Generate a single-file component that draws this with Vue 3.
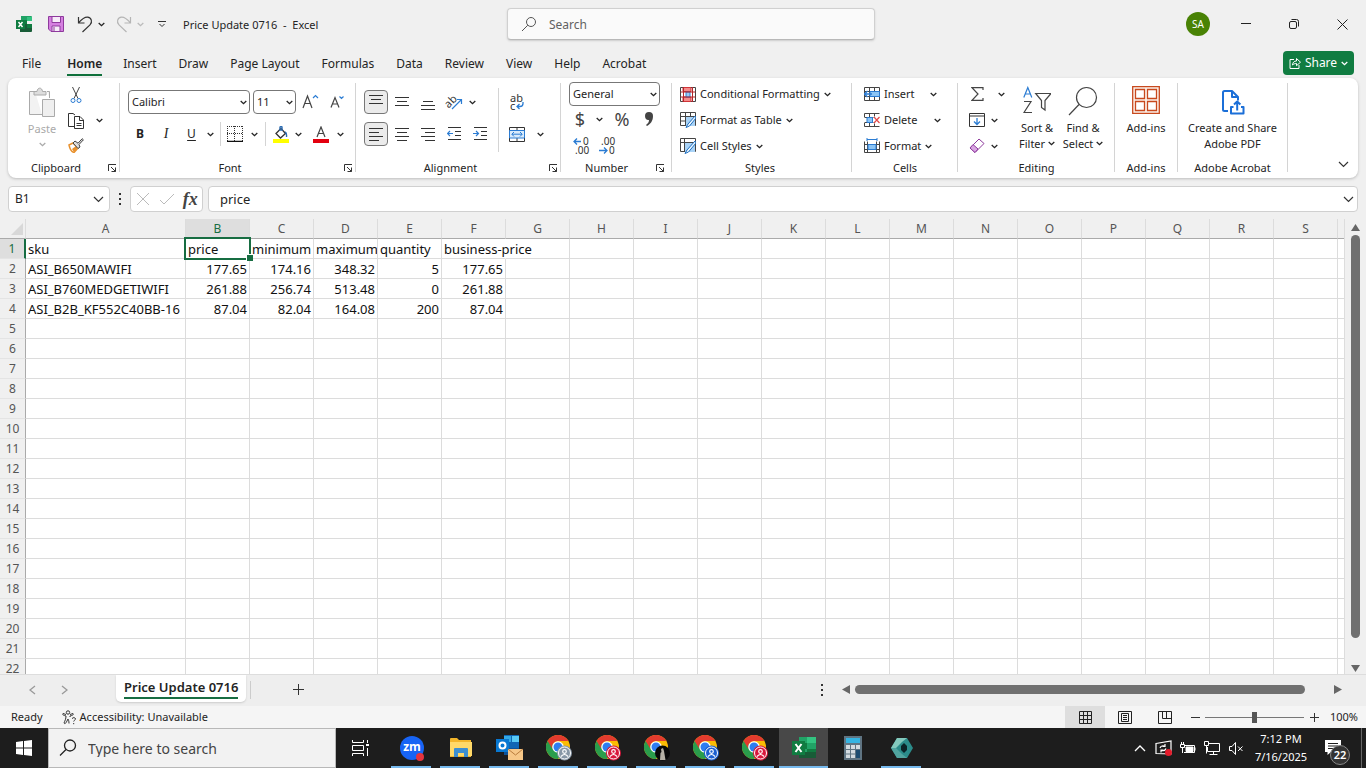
<script setup>
import { h, ref } from 'vue'

const Chev = () => h('svg', { width: 7, height: 5, viewBox: '0 0 7 5', fill: 'none', stroke: 'currentColor', 'stroke-width': 1.3 }, [h('path', { d: 'M.7 1 3.5 3.7 6.3 1' })])
const Launcher = () => h('svg', { width: 10, height: 10, viewBox: '0 0 10 10', fill: 'none', stroke: '#333' }, [h('path', { d: 'M1.5 8V1.5H9M4 4l4.5 4.5M8.5 4.5v4h-4' })])

const menu = ['File', 'Home', 'Insert', 'Draw', 'Page Layout', 'Formulas', 'Data', 'Review', 'View', 'Help', 'Acrobat']
const columns = 'ABCDEFGHIJKLMNOPQRS'.split('').concat('')
const cells = {
  1: ['sku', 'price', 'minimum', 'maximum', 'quantity', 'business-price'],
  2: ['ASI_B650MAWIFI', '177.65', '174.16', '348.32', '5', '177.65'],
  3: ['ASI_B760MEDGETIWIFI', '261.88', '256.74', '513.48', '0', '261.88'],
  4: ['ASI_B2B_KF552C40BB-16', '87.04', '82.04', '164.08', '200', '87.04'],
}
const cellText = (r, i) => (cells[r] && cells[r][i]) || ''

const vAligns = [
  { name: 'Top Align', d: 'M0 1.5h14M2 5.5h10M0 9.5h14', on: true },
  { name: 'Middle Align', d: 'M0 3.5h14M2 7.5h10M0 11.5h14' },
  { name: 'Bottom Align', d: 'M2 7.5h10M0 11.5h14M0 15.5h14' },
]
const hAligns = [
  { name: 'Align Left', d: 'M0 2.5h14M0 6.5h10M0 10.5h14M0 14.5h10', on: true },
  { name: 'Center', d: 'M0 2.5h14M2 6.5h10M0 10.5h14M2 14.5h10' },
  { name: 'Align Right', d: 'M0 2.5h14M4 6.5h10M0 10.5h14M4 14.5h10' },
]
const apps = [
  { id: 'zoom', open: true }, { id: 'files', open: true }, { id: 'outlook', open: true },
  { id: 'chrome', badge: '#8796a5', open: true }, { id: 'chrome', badge: '#d8173c', open: true },
  { id: 'chrome', badge: '', open: true }, { id: 'chrome', badge: '#1a5fd0', open: true },
  { id: 'chrome', badge: '#d8173c', open: true }, { id: 'excel', open: true, active: true },
  { id: 'calc' }, { id: 'hex', open: true },
]
const formula = ref('price')
const cellRef = ref('B1')
const zoom = ref(50)
</script>

<template>
  <div class="window">
    <header class="titlebar">
      <div class="quick">
        <svg class="logo" width="16" height="16" viewBox="0 0 16 16"><path fill="#21a366" d="M5 0h10a1 1 0 0 1 1 1v4H5z" /><path fill="#107c41" d="M4 4h7v8H4z" /><path fill="#33c481" d="M11 1h5v4h-5z" /><path fill="#185c37" d="M4 8h12v7a1 1 0 0 1-1 1H4z" /><path fill="#107c41" d="M11 8h5v4h-5zM0 4h9v9H0z" /><path d="m2.500 6 4 5m0-5-4 5" stroke="#fff" stroke-width="1.500" /></svg>
        <button class="save" aria-label="Save"><svg width="16" height="16" viewBox="0 0 16 16"><path d="M.5.500h15v15H3L.5 13z" fill="#d57fe0" stroke="#8e3a9d" /><path d="M4 .5h8.500v6H4zM4 10h8v5.500H4z" fill="#f7eaf9" stroke="#8e3a9d" /><path d="M6 11v4" stroke="#8e3a9d" /></svg></button>
        <button class="undo" aria-label="Undo"><svg width="16" height="17" viewBox="0 0 16 17" fill="none" stroke="#333" stroke-width="1.200"><path d="M1.500 1v6h6M1.700 6.700C5 3 7.500 1 10.500 1.200c4 .3 5.300 4.800 2.500 7.600L5.500 16" /></svg></button>
        <button class="mini" aria-label="Undo list"><Chev /></button>
        <button class="undo faded" aria-label="Redo"><svg width="16" height="17" viewBox="0 0 16 17" fill="none" stroke="#b5b5b5" stroke-width="1.200"><path d="M14.500 1v6h-6M14.300 6.700C11 3 8.500 1 5.500 1.200c-4 .3-5.300 4.800-2.500 7.600L10.500 16" /></svg></button>
        <button class="mini faded" aria-label="Redo list"><Chev /></button>
        <button class="custom" aria-label="Customize Quick Access Toolbar"><svg width="8" height="8" viewBox="0 0 8 8" fill="none" stroke="#333"><path d="M0 1.500h8M1.500 4 4 6.500 6.500 4" /></svg></button>
        <h1>Price Update 0716&nbsp; -&nbsp; Excel</h1>
      </div>
      <label class="find">
        <svg width="16" height="16" viewBox="0 0 16 16" fill="none" stroke="#555"><circle cx="10" cy="6" r="4.500" /><path d="M6.800 9.200 1 15" /></svg>
        <input type="text" placeholder="Search" aria-label="Search">
      </label>
      <div class="wincontrols">
        <button class="avatar" aria-label="Account">SA</button>
        <button class="win" aria-label="Minimize"><svg width="10" height="10"><path d="M0 4.500h10" stroke="#222" /></svg></button>
        <button class="win" aria-label="Restore"><svg width="10" height="10" fill="none" stroke="#222"><rect x=".5" y="2.500" width="7" height="7" rx="1.500" /><path d="M2.500.5h5a2 2 0 0 1 2 2v5" /></svg></button>
        <button class="win" aria-label="Close"><svg width="11" height="11" stroke="#222"><path d="m.5.500 10 10m0-10-10 10" /></svg></button>
      </div>
    </header>

    <nav class="menu">
      <a v-for="m in menu" :key="m" href="#" :class="{ current: m === 'Home' }">{{ m }}</a>
      <button class="share"><svg width="12" height="12" viewBox="0 0 12 12" fill="none" stroke="#fff"><path d="M5 2.500H1v9h9V8M3.500 8c.2-2.500 1.500-4 4-4V1.500l4 3.700-4 3.500V6.500c-1.800 0-3 .5-4 1.500z" /></svg>Share<Chev /></button>
    </nav>

    <section class="ribbon" aria-label="Home ribbon">
      <div class="group clipboard">
        <div class="body">
          <button class="paste" disabled>
            <svg width="28" height="32" viewBox="0 0 28 32" fill="#f2f2f2" stroke="#aaa"><path d="M7 4.500H1.500v23H14M19 4.500h2.500V11" /><path fill="#ddd" d="M6 8V4.500h3C9.500 0 14 0 14.500 4.500H18V8z" /><path fill="#efefef" d="M14.500 12.500h12v17h-12z" /></svg>
            <span>Paste</span><Chev />
          </button>
          <div class="clipcol">
            <button aria-label="Cut"><svg width="12" height="17" viewBox="0 0 12 17" fill="none"><path d="M2.500 0 8 11.500M9.500 0 4 11.500" stroke="#444" /><circle cx="3" cy="13.500" r="2" stroke="#2b7cd3" /><circle cx="9" cy="13.500" r="2" stroke="#2b7cd3" /></svg></button><i></i>
            <button aria-label="Copy"><svg width="16" height="16" viewBox="0 0 16 16" fill="#fff" stroke="#333"><path d="M7 13.500H.5V.5H5l2 1.500M6.500 3.500H12l3.500 3.500v8.500h-9zM11.500 3.500V7.500h4M8.500 10.500h5M8.500 12.500h5" /></svg></button><button aria-label="Copy options"><Chev /></button>
            <button aria-label="Format Painter"><svg width="16" height="15" viewBox="0 0 16 15"><path d="m1 7 4-2 5 5-4 4.500c-2.500-.5-4-3-5-7.500z" fill="#fff" stroke="#e8912d" stroke-width="1.500" /><path d="m4 11 4-3 1.500 2L6 14z" fill="#e8912d" /><path d="m5 5 2-2 3 2.200L14.200.7l1.200 1.100L11 6.500l1 2.500-2 1.500z" fill="#ddd" stroke="#444" /></svg></button><i></i>
          </div>
        </div>
        <div class="caption"><span>Clipboard</span><button aria-label="Clipboard settings"><Launcher /></button></div>
      </div>

      <div class="group font">
        <div class="body stack">
          <div class="line pickers">
            <label class="picker"><select aria-label="Font"><option>Calibri</option></select><Chev /></label>
            <label class="picker"><select aria-label="Font size"><option>11</option></select><Chev /></label>
            <button class="grow" aria-label="Increase font size"><svg width="17" height="16" fill="none" stroke="#444" stroke-width="1.200"><path d="m1 14 4.500-12L10 14M2.500 9.500h6" /><path d="m11 4 2.500-2.500L16 4" stroke="#2b7cd3" /></svg></button>
            <button class="grow last" aria-label="Decrease font size"><svg width="15" height="14" fill="none" stroke="#444" stroke-width="1.200"><path d="m1 12.500 4-10 4 10M2.500 9h5" /><path d="m9.500 1.500 2 2 2-2" stroke="#2b7cd3" /></svg></button>
          </div>
          <div class="line fontfmt">
            <button class="bold">B</button><button class="italic">I</button><button class="under">U</button>
            <button aria-label="Underline options"><Chev /></button><span class="rule"></span>
            <button aria-label="Borders"><svg width="16" height="16" fill="none" stroke="#333"><path d="M.5 0v15M15.500 0v15M0 .5h16M7.500 0v15M0 7.500h16" stroke-dasharray="1 1" /><path d="M0 15.500h16" stroke="#111" stroke-width="1.500" /></svg></button>
            <button aria-label="Border options"><Chev /></button><span class="rule"></span>
            <button aria-label="Fill color"><svg width="16" height="17"><path d="M3 7.500 8 2.500l4.500 5-5 4.500z" fill="#fff" stroke="#333" stroke-width="1.300" /><path d="M7 5V1q1.500-1 2 0v4M12 6q2 1 1.500 5" fill="none" stroke="#2b6cb3" stroke-width="1.400" /><path d="M0 13h16v4H0z" fill="#ff0" /></svg></button>
            <button aria-label="Fill color options"><Chev /></button>
            <button aria-label="Font color"><svg width="16" height="17"><path d="m4 11 4-10 4 10M5.300 7.500h5.400" fill="none" stroke="#444" stroke-width="1.200" /><path d="M0 13h16v4H0z" fill="#e3000f" /></svg></button>
            <button aria-label="Font color options"><Chev /></button>
          </div>
        </div>
        <div class="caption"><span>Font</span><button aria-label="Font settings"><Launcher /></button></div>
      </div>

      <div class="group alignment">
        <div class="body">
          <div class="stack">
            <div class="line aligns">
              <button v-for="a in vAligns" :key="a.name" :aria-label="a.name" :class="{ on: a.on }"><svg width="14" height="17" fill="none" stroke="#333"><path :d="a.d" /></svg></button>
              <button aria-label="Orientation"><svg class="loose" width="17" height="16"><text x="-1" y="12" class="tilt" transform="rotate(-45 4 9)">ab</text><path d="M6 15 15.500 5.500M11 5.500h4.500V10" fill="none" stroke="#2b7cd3" stroke-width="1.200" /></svg></button>
              <button class="slim" aria-label="Orientation options"><Chev /></button>
            </div>
            <div class="line aligns">
              <button v-for="a in hAligns" :key="a.name" :aria-label="a.name" :class="{ on: a.on }"><svg width="14" height="17" fill="none" stroke="#333"><path :d="a.d" /></svg></button>
              <button aria-label="Decrease indent"><svg width="15" height="16" fill="none" stroke="#333"><path d="M1 1.500h13M8 5.500h6M8 9.500h6M1 13.500h13" /><path d="M6 7.500H.5M3 5 .5 7.500 3 10" stroke="#2b7cd3" stroke-width="1.200" /></svg></button>
              <button aria-label="Increase indent"><svg width="15" height="16" fill="none" stroke="#333"><path d="M1 1.500h13M8 5.500h6M8 9.500h6M1 13.500h13" /><path d="M0 7.500h5.500M3 5l2.500 2.500L3 10" stroke="#2b7cd3" stroke-width="1.200" /></svg></button>
            </div>
          </div>
          <span class="rule tall"></span>
          <div class="stack wraps">
            <button class="wrap" aria-label="Wrap Text"><svg class="loose" width="15" height="18"><text x="0" y="9" class="ab">ab</text><text x="0" y="17" class="ab">c</text><path d="M13 9v1.500q0 3-3 3H7M9.500 11 7 13.500 9.500 16" fill="none" stroke="#2b7cd3" stroke-width="1.300" /></svg></button>
            <div class="merge"><button aria-label="Merge and Center"><svg width="16" height="15" fill="none" stroke="#333"><path d="M.5.500h15v14H.5zM8 .5v3M8 11v3.500" /><path d="M.5 3.500h15v7.500H.5z" fill="#d9ebfb" stroke="#2b7cd3" /><path d="M3 7.200h10M5 5 2.800 7.200 5 9.500M11 5l2.200 2.200L11 9.500" stroke="#2b7cd3" /></svg></button><button aria-label="Merge options"><Chev /></button></div>
          </div>
        </div>
        <div class="caption"><span>Alignment</span><button aria-label="Alignment settings"><Launcher /></button></div>
      </div>

      <div class="group number">
        <div class="body">
          <label class="picker"><select aria-label="Number format"><option>General</option></select><Chev /></label>
          <div class="line formats"><button class="sym">$</button><button aria-label="Currency options"><Chev /></button><button class="sym">%</button><button aria-label="Comma style"><svg width="8" height="14" fill="#444"><path d="M0 4a4 4 0 1 1 8 0c0 5-2.500 8-6 10l-1-1c2-1.500 3-3 3-5C2 8.500 0 7 0 4z" /></svg></button></div>
          <div class="line decimals">
            <button aria-label="Increase decimal"><svg class="loose" width="17" height="17"><text x="10" y="8" class="digits">0</text><text x="2" y="17" class="digits">.00</text><path d="M8 4.500H.8M4 1.500l-3 3 3 3" fill="none" stroke="#2b7cd3" stroke-width="1.300" /></svg></button>
            <button aria-label="Decrease decimal"><svg class="loose" width="17" height="17"><text x="2" y="8" class="digits">.00</text><text x="10" y="17" class="digits">0</text><path d="M0 13.500h8M5 10.500l3 3-3 3" fill="none" stroke="#2b7cd3" stroke-width="1.300" /></svg></button>
          </div>
        </div>
        <div class="caption"><span>Number</span><button aria-label="Number settings"><Launcher /></button></div>
      </div>

      <div class="group styles">
        <div class="body rows">
          <button><svg width="16" height="15" fill="#fff" stroke="#444"><path d="M.5.500h15v14H.5z" /><path d="M3 .5h8v4H3zM3 10h8v4.500H3z" fill="#f58b8b" stroke="#d13438" /><path d="M6 5v5h4V5z" fill="#9bcbf5" stroke="#2b7cd3" /><path d="M.5 5h15M.5 10h15M12.500 0v15M3.500 0v15" fill="none" stroke="#b3262b" /></svg>Conditional Formatting<Chev /></button>
          <button><svg width="16" height="16" fill="#fff" stroke="#444"><path d="M.5.500h15v13H.5zM.5 4.500h15M5.500.5v13M10.500.5v13M.5 9h15" /><path d="M6 5h9v9H6z" fill="#a9d3f7" stroke="none" /><path d="m15 4-7 8-2 3.500 3.500-1.500L16 6z" fill="#eaf5fd" stroke="#1f6fc0" /></svg>Format as Table<Chev /></button>
          <button><svg width="16" height="16" fill="#fff" stroke="#444"><path d="M.5.500h15v13H.5zM.5 4.500h15M4.500.5v13" /><path d="M5 5h10v9H5z" fill="#a9d3f7" stroke="none" /><path d="m15 3-8 9-2 3.500 3.500-1.500L16 5z" fill="#eaf5fd" stroke="#1f6fc0" /></svg>Cell Styles<Chev /></button>
        </div>
        <div class="caption"><span>Styles</span></div>
      </div>

      <div class="group cellsgrp">
        <div class="body rows">
          <div class="split"><button><svg width="16" height="15" fill="none" stroke="#444"><path d="M.5.500h15v13H.5zM5.500.5v13M10.500.5v13M.5 4.500h15M.5 9.500h15" /><path d="M6 4.500h9.500v5H6z" fill="#8cc5f5" stroke="#2b7cd3" /><path d="M0 7h8M3.500 4 .5 7l3 3" stroke="#2b7cd3" stroke-width="1.300" /></svg>Insert</button><button aria-label="Insert options"><Chev /></button></div>
          <div class="split wide"><button><svg width="16" height="15" fill="none" stroke="#444"><path d="M.5.500h15M.5 13.500h15M.5 4V.5M.5 13.500V10M5.500.5v13M10.500.5v3M10.500 10.500v3M.5 4.500h9M.5 9.500h9" /><path d="M3 4.500h5.500v5H3z" fill="#8cc5f5" stroke="#2b7cd3" /><path d="m10 4 5.500 6m0-6L10 10" stroke="#e04848" stroke-width="1.200" /></svg>Delete</button><button aria-label="Delete options"><Chev /></button></div>
          <button><svg width="16" height="16" fill="none" stroke="#444"><path d="M.5 3.500v11h15v-11M3.500 3.500v11M12.500 3.500v11M.5 6.500h15M.5 11.500h15" /><path d="M4 6.500h8v5H4z" fill="#8cc5f5" stroke="#2b7cd3" /><path d="M3 1.500h10M3 0v3M13 0v3" stroke="#2b7cd3" /></svg>Format<Chev /></button>
        </div>
        <div class="caption"><span>Cells</span></div>
      </div>

      <div class="group editing">
        <div class="body">
          <div class="edits">
            <button aria-label="AutoSum"><svg width="13" height="14" fill="none" stroke="#444" stroke-width="1.200"><path d="M12 3V.7H1L7 7l-6 6.300h11V11" /></svg></button><button class="far" aria-label="AutoSum options"><Chev /></button>
            <button aria-label="Fill"><svg width="16" height="14" fill="none" stroke="#333"><path d="M.5.500h15v13H.5zM.5 3h15" /><path d="M8 5v6.500M5 8.500l3 3 3-3" stroke="#2b7cd3" stroke-width="1.300" /></svg></button><button aria-label="Fill options"><Chev /></button>
            <button aria-label="Clear"><svg width="16" height="16" fill="#fff" stroke="#8e3a9d"><path d="m1 10 9-9 5 4.500-9 9z" /><path d="m1 10 3-3.500L9 11l-3 3.500z" fill="#d9a5e2" /></svg></button><button aria-label="Clear options"><Chev /></button>
          </div>
          <button class="big"><svg width="28" height="28" fill="none" stroke="#444" stroke-width="1.200"><path d="m.8 11.500 4-10 4 10M2.300 8h5" stroke="#2b7cd3" /><path d="M1 15.500h7L1 26.500h8" /><path d="M12.700 7.500H28l-6 7V24l-3.500-2.500v-7z" /></svg><span>Sort &amp;<br>Filter <Chev /></span></button>
          <button class="big"><svg width="30" height="30" fill="none" stroke="#444" stroke-width="1.200"><circle cx="18.500" cy="11.500" r="10" /><path d="M11 18.500 1 29" /></svg><span>Find &amp;<br>Select <Chev /></span></button>
        </div>
        <div class="caption"><span>Editing</span></div>
      </div>

      <div class="group addins">
        <div class="body"><button class="big"><svg width="28" height="28" fill="#fff" stroke="#c8491e" stroke-width="1.300"><path d="M.7.700h26.600v26.600H.7z" fill="#fdf3ec" /><path d="M3.500 3.500h9v9h-9zM15.500 3.500h9v9h-9zM3.500 15.500h9v9h-9zM15.500 15.500h9v9h-9z" /></svg><span>Add-ins</span></button></div>
        <div class="caption"><span>Add-ins</span></div>
      </div>
      <div class="group adobe">
        <div class="body"><button class="big"><svg width="24" height="29" viewBox="0 -2 24 29" fill="none" stroke="#1b6fd8" stroke-width="2" stroke-linejoin="round"><path d="M7 22.500H3.500A1.500 1.500 0 0 1 2 21V4a1.500 1.500 0 0 1 1.500-1.500H11l6 6V12M11 2.500v6h6" /><path d="M12.500 18.500H10V25h12.500v-6.500H20M16.200 22v-9M13 16l3.200-3 3.200 3" /></svg><span>Create and Share<br>Adobe PDF</span></button></div>
        <div class="caption"><span>Adobe Acrobat</span></div>
      </div>
      <button class="collapse" aria-label="Collapse ribbon"><svg width="11" height="7" fill="none" stroke="#333" stroke-width="1.200"><path d="m1 1 4.500 4.500L10 1" /></svg></button>
    </section>

    <div class="formulabar">
      <label class="namebox"><input v-model="cellRef" type="text" aria-label="Name box"><svg width="11" height="7" fill="none" stroke="#333" stroke-width="1.200"><path d="m1 1 4.500 4.500L10 1" /></svg></label>
      <span class="dots"></span>
      <div class="fx">
        <button aria-label="Cancel"><svg width="12" height="12" stroke="#bbb"><path d="m0 0 12 12M12 0 0 12" /></svg></button>
        <button aria-label="Enter"><svg width="16" height="12" fill="none" stroke="#bbb"><path d="m1 7 4 4L15 1" /></svg></button>
        <button class="fn" aria-label="Insert function">fx</button>
      </div>
      <label class="entry"><input v-model="formula" type="text" aria-label="Formula bar"><svg width="11" height="7" fill="none" stroke="#333" stroke-width="1.200"><path d="m1 1 4.500 4.500L10 1" /></svg></label>
    </div>

    <main class="sheet">
      <div class="gridwrap">
        <table>
          <colgroup><col class="num"><col class="first"><col v-for="c in columns.slice(1)" :key="c" class="std"></colgroup>
          <thead><tr><th class="corner"><svg width="12" height="12"><path d="M12 0v12H0z" fill="#d8d8d8" /></svg></th><th v-for="c in columns" :key="c" :class="{ sel: c === 'B' }">{{ c }}</th></tr></thead>
          <tbody>
            <tr v-for="r in 22" :key="r">
              <th :class="{ sel: r === 1 }">{{ r }}</th>
              <td v-for="(c, i) in columns" :key="c" :class="{ value: r > 1 && i > 0, active: r === 1 && c === 'B', spill: r === 1 && c === 'F' }">{{ cellText(r, i) }}</td>
            </tr>
          </tbody>
        </table>
      </div>
      <div class="vscroll">
        <button aria-label="Scroll up"><svg width="9" height="7" fill="#666"><path d="M4.500 0 9 7H0z" /></svg></button>
        <span class="thumb"></span><span class="track"></span>
        <button aria-label="Scroll down"><svg width="9" height="7" fill="#666"><path d="M4.500 7 9 0H0z" /></svg></button>
      </div>
    </main>

    <div class="tabs">
      <button class="step" aria-label="Previous sheet"><svg width="7" height="10" fill="none" stroke="#999" stroke-width="1.300"><path d="M6 1 1 5l5 4" /></svg></button>
      <button class="step" aria-label="Next sheet"><svg width="7" height="10" fill="none" stroke="#999" stroke-width="1.300"><path d="m1 1 5 4-5 4" /></svg></button>
      <button class="tab"><span>Price Update 0716</span></button>
      <span class="tabrule"></span>
      <button class="add" aria-label="New sheet"><svg width="11" height="11" stroke="#333"><path d="M5.500 0v11M0 5.500h11" /></svg></button>
      <span class="dots"></span>
      <div class="hscroll">
        <button aria-label="Scroll left"><svg width="8" height="9" fill="#666"><path d="M0 4.500 8 0v9z" /></svg></button>
        <span class="thumb"></span>
        <button class="right" aria-label="Scroll right"><svg width="8" height="9" fill="#666"><path d="M8 4.500 0 0v9z" /></svg></button>
      </div>
    </div>

    <footer class="status">
      <span class="ready">Ready</span>
      <button class="access"><svg width="15" height="15" viewBox="0 0 15 15" fill="none" stroke="#333"><circle cx="6" cy="2.500" r="1.700" /><path d="M4 4.500 1 3.500c-1 1 0 1.700 3 2.500 0 3-1 4.500-2 7 1 1.500 1.800.5 4-4 .5 1 1 2 1 4.500M8 4.500l3-1c1 1 0 1.700-3 2.500v1M10 8.500q2-2 3.500 0c.5 1.500-1.800 1.500-1.800 3M11.700 13v1.200" /></svg>Accessibility: Unavailable</button>
      <div class="views">
        <button class="on" aria-label="Normal view"><svg width="13" height="13" fill="none" stroke="#222"><path d="M.5.500h12v12H.5zM4.500 0v13M8.500 0v13M0 4.500h13M0 8.500h13" /></svg></button>
        <button aria-label="Page layout view"><svg width="14" height="13" fill="none" stroke="#222"><path d="M.5.500h13v12H.5zM3.500 2.500h7v8h-7zM5 4.500h4M5 6.500h4M5 8.500h4" /></svg></button>
        <button aria-label="Page break view"><svg width="14" height="13" fill="none" stroke="#222"><path d="M.5.500h13v12H.5zM4.500.5v7M8.500.5v7M4.500 7.500h9" /></svg></button>
      </div>
      <button class="zbtn" aria-label="Zoom out"><svg width="9" height="9" stroke="#333"><path d="M0 4.500h9" /></svg></button>
      <input v-model="zoom" class="zoom" type="range" aria-label="Zoom">
      <button class="zbtn" aria-label="Zoom in"><svg width="9" height="9" stroke="#333"><path d="M0 4.500h9M4.500 0v9" /></svg></button>
      <button class="pct">100%</button>
    </footer>

    <div class="taskbar">
      <button class="start" aria-label="Start"><svg width="16" height="16" fill="#fff"><path d="m0 2 7-1v6.500H0zM8 .9 16 0v7.500H8zM0 8.500h7V15l-7-1zM8 8.500h8V16l-8-1z" /></svg></button>
      <label class="wsearch"><svg width="18" height="18" fill="none" stroke="#222" stroke-width="1.300"><circle cx="11" cy="6.500" r="5.500" /><path d="M7 10.500 1 16.500" /></svg><input type="text" placeholder="Type here to search" aria-label="Windows search"></label>
      <button class="taskview" aria-label="Task view"><svg width="17" height="16" fill="none" stroke="#fff"><path d="M.5 0v2.500h11V0M.5 5.500h11v5H.5zM.5 16v-2.500h11V16M15.500 0v3M15.500 8v8" /><path d="M14 5h3" stroke-width="2" /></svg></button>
      <button v-for="(a, i) in apps" :key="i" class="app" :class="{ open: a.open, live: a.active }" :aria-label="a.id">
        <svg v-if="a.id === 'zoom'" width="24" height="26"><circle cx="12" cy="13" r="12" fill="#1764f5" /><text x="12" y="16" class="zm">zm</text><circle cx="20" cy="22" r="4" fill="#e5343d" /></svg>
        <svg v-else-if="a.id === 'files'" width="22" height="20"><path d="M0 1q0-1 1-1h6l2 2h12v17H0z" fill="#f3b62b" /><path d="M0 4h22v14H0z" fill="#ffd969" /><path d="M4 19v-8q0-1 1-1h12q1 0 1 1v8h-4v-4H8v4z" fill="#3d8fd1" /></svg>
        <svg v-else-if="a.id === 'outlook'" width="28" height="26"><path d="M8 0h15v15H8z" fill="#1066b5" /><path d="M8 1h7v6H8z" fill="#32a9e7" /><path d="M16 1h7v6h-7z" fill="#59caf5" /><path d="M8 13h15v7H8z" fill="#0e5297" /><path d="M0 4h13v13H0z" fill="#0878d2" /><circle cx="6.500" cy="10.500" r="3" fill="none" stroke="#fff" stroke-width="2" /><path d="M12 14h15v11H12z" fill="#f7c788" /><path d="m12 14 7.500 6 7.500-6" fill="none" stroke="#b97c3e" /></svg>
        <svg v-else-if="a.id === 'chrome'" width="26" height="26"><circle cx="12" cy="12" r="12" fill="#fbbc04" /><path d="M12 12 1.600 6A12 12 0 0 0 12 24l5.500-9z" fill="#2a9d4c" /><path d="M1.600 6A12 12 0 0 1 22.400 6H12a6 6 0 0 0-5.500 8z" fill="#e33b2e" /><circle cx="12" cy="12" r="5.800" fill="#fff" /><circle cx="12" cy="12" r="4.500" fill="#2e7df0" /><template v-if="a.badge"><circle cx="18.500" cy="18" r="7.500" :fill="a.badge" /><circle cx="18.500" cy="18" r="6" fill="none" stroke="#fff" /><circle cx="18.500" cy="16.500" r="1.800" fill="none" stroke="#fff" stroke-width="1.200" /><path d="M15 21.500q3.500-4 7 0" fill="none" stroke="#fff" stroke-width="1.200" /></template><template v-else><circle cx="18.500" cy="18" r="7.500" fill="#080808" /><path d="m16 25 .5-7 1-1-.5-3 2-1 1 3 1.500 9z" fill="#b5b0a5" /></template></svg>
        <svg v-else-if="a.id === 'excel'" width="24" height="22"><path d="M7 0h17v21H7z" fill="#21a366" /><path d="M15 0h9v6h-9z" fill="#33c481" /><path d="M7 6h8v6H7zM15 12h9v5h-9z" fill="#107c41" /><path d="M7 15h17v6H7z" fill="#185c37" /><path d="M0 4h13v14H0z" fill="#107c41" /><path d="m3.500 7 6 8m0-8-6 8" stroke="#fff" stroke-width="2" /></svg>
        <svg v-else-if="a.id === 'calc'" width="18" height="24"><path d="M0 0h18v24H0z" fill="#5f7482" /><path d="M2 2h14v5H2z" fill="#35b4e2" /><path d="M2 9h4v4H2zM7 9h4v4H7zM12 9h4v4h-4zM2 14h4v3.500H2zM7 14h4v3.500H7zM2 18.500h4V22H2zM7 18.500h4V22H7z" fill="#d3dbe0" /><path d="M12 14h4v8h-4z" fill="#1d4c70" /></svg>
        <svg v-else width="22" height="20"><path d="M6 0h10l6 10-6 10H6L0 10z" fill="#2b8c8a" /><path d="M6 0h10l-5 4-6 6H0z" fill="#83c9bd" /><path d="M0 10h5l6 6 5 4H6z" fill="#51a5a0" /><path d="m13 5 3 3v4l-3 3-3-3V8z" fill="#0b2428" /></svg>
      </button>
      <div class="tray">
        <button aria-label="Show hidden icons"><svg width="12" height="7" fill="none" stroke="#fff" stroke-width="1.300"><path d="m1 6 5-5 5 5" /></svg></button>
        <button aria-label="Updates"><svg width="18" height="17" fill="none" stroke="#fff" stroke-width="1.200"><path d="M1 3.500 16 1v13L1 13.500z" /><path d="M5 8q1-3 4.500-2M10 4v2.500H7.500M11 8.500q-1 3-4.500 2M6 12.500V10h2.500" /><circle cx="13.500" cy="12.500" r="3.500" fill="#e51c2c" stroke="none" /></svg></button>
        <button aria-label="Battery"><svg width="16" height="12" fill="none" stroke="#fff"><path d="M5 3.500h9.500v7H4M15 5.500v3M.5 2.500h4v3h-4zM1.500 0v2M3.500 0v2M2.500 6v5" /><path d="M6 5h7v4.500H6z" fill="#fff" /></svg></button>
        <button aria-label="Network"><svg width="17" height="14" fill="none" stroke="#fff"><path d="M5 2.500h10.500v8H3.500V6M9.500 10.500v3M5.500 13.500h8M.5.500h4v4h-4zM2.500 4.500v8" /></svg></button>
        <button aria-label="Volume muted"><svg width="15" height="13" fill="none" stroke="#fff"><path d="M.5 4.500h2.500l3.500-4v12L3 8.500H.5zM9 4.500l4.500 4.500m0-4.500L9 9" /></svg></button>
        <button class="clock"><span>7:12 PM</span><span>7/16/2025</span></button>
        <button class="notes" aria-label="Notifications"><svg width="17" height="16"><path d="M0 0h16v12H6l-3.500 3v-3H0z" fill="#fff" /><path d="M3 3.500h10M3 6h10M3 8.500h7" stroke="#1d1d1d" /></svg><span class="count">22</span></button>
      </div>
    </div>
  </div>
</template>

<style>
body { margin: 0; overflow: hidden; }
</style>

<style scoped>
* { box-sizing: border-box; }
.window { height: 100vh; display: flex; flex-direction: column; background: #f0f0f0; color: #242424; font: 11px/16px "Noto Sans", "Open Sans", sans-serif; }
button, input, select { font: inherit; color: inherit; border: 0; background: none; padding: 0; margin: 0; outline: 0; }
button { display: flex; align-items: center; justify-content: center; white-space: nowrap; }
svg { flex: none; display: block; }
.loose { overflow: visible; }
a { color: inherit; text-decoration: none; }

.titlebar { height: 48px; flex: none; display: flex; align-items: center; }
.quick { width: 507px; display: flex; align-items: center; padding-left: 16px; }
.save { margin-left: 16px; }
.undo { margin-left: 13px; }
.mini { width: 16px; }
.undo.faded { margin-left: 7px; }
.faded { color: #bbb; }
.custom { width: 28px; }
.quick h1 { font-size: 11px; font-weight: 400; line-height: 16px; margin: 0 0 0 7px; padding-top: 1px; white-space: nowrap; }
.find { flex: 0 1 368px; height: 32px; display: flex; align-items: center; gap: 12px; padding-left: 13px; background: #fafafa; border: 1px solid #d0d0d0; border-bottom-color: #b8b8b8; border-radius: 4px; box-shadow: 0 1px 2px #ccc; }
.find input { flex: 1; min-width: 0; font-size: 12px; padding-top: 1px; }
input::placeholder { color: #616161; opacity: 1; }
.wincontrols { margin-left: auto; display: flex; align-items: center; }
.avatar { width: 24px; height: 24px; border-radius: 50%; background: #498205; color: #fff; margin-right: 12px; font-size: 10px; }
.win { width: 48px; height: 32px; }

.menu { height: 30px; flex: none; display: flex; align-items: center; gap: 22px; padding: 0 12px 0 22px; font-size: 12px; white-space: nowrap; }
.menu a { line-height: 20px; padding-top: 3px; border-bottom: 2px solid transparent; }
.menu a:first-child { margin-right: 4px; }
.menu .current { border-color: #0f703b; font-weight: 600; margin-right: -1px; }
.share { margin-left: auto; width: 71px; height: 24px; background: #107c41; color: #fff; border-radius: 4px; gap: 4px; font-size: 12px; }

.ribbon { flex: none; margin: 0 8px; height: 100px; background: #fff; border-radius: 8px; display: flex; box-shadow: 0 1px 3px #bbb; }
.group { display: flex; flex-direction: column; flex: none; position: relative; padding: 4px 0 2px; }
.group::after { content: ""; position: absolute; right: 0; top: 5px; bottom: 6px; width: 1px; background: #d4d4d4; }
.body { flex: 1; display: flex; }
.caption { height: 16px; display: flex; align-items: center; }
.caption span { flex: 1; text-align: center; }
.caption button { width: 16px; }
.clipboard { width: 112px; }
.group.font { width: 236px; } .alignment { width: 205px; } .number { width: 111px; } .styles { width: 180px; } .cellsgrp { width: 106px; } .editing { width: 157px; } .addins { width: 63px; } .adobe { width: 110px; }
.number .caption { padding-right: 4px; }
.group.styles, .group.cellsgrp, .group.editing { padding-top: 3px; }
.paste { flex-direction: column; justify-content: flex-start; color: #aaa; width: 50px; margin-left: 9px; padding-top: 5px; }
.paste span { margin: 2px 0 5px; }
.clipcol { display: grid; grid-template: repeat(3, 25px) / 20px 26px; margin-left: -1px; padding-top: 1px; }
.stack { display: flex; flex-direction: column; }
.line { display: grid; align-items: center; height: 32px; }
.font .stack { padding: 4px 0 0 7px; }
.pickers { grid-template-columns: 122px 43px 28px 26px; column-gap: 3px; padding-left: 1px; }
.picker { height: 24px; display: flex; align-items: center; border: 1px solid #777; border-radius: 4px; padding: 0 2px 0 3px; }
.picker select { appearance: none; flex: 1; min-width: 0; }
.grow { margin-left: -6px; }
.grow.last { margin-left: -12px; }
.fontfmt { grid-template-columns: 26px 26px 25px 12px 8px 22px 16px 7px 24px 11px 34px 4px; }
.fontfmt button, .aligns button, .formats button { height: 24px; }
.bold { font-weight: 700; font-size: 12px; }
.italic { font: italic 14px "Liberation Serif", serif; }
.under { font-size: 12px; text-decoration: underline; text-underline-offset: 2px; }
.rule { width: 1px; height: 24px; background: #d4d4d4; justify-self: center; }
.alignment .body { padding: 4px 0 0 8px; }
.aligns { grid-template-columns: 24px 24px 24px 24px 24px; column-gap: 2px; }
.aligns .slim { width: 8px; }
.on { background: #ebebeb; }
.aligns .on { border: 1px solid #777; border-radius: 4px; }
.rule.tall { height: 64px; margin: 2px 0 0 6px; }
.wraps { padding: 0 0 0 10px; }
.wraps .wrap { width: 16px; height: 32px; }
.merge { height: 32px; display: flex; align-items: center; }
.merge button:last-child { width: 30px; }
.tilt, .ab { font: 11px "Noto Sans", sans-serif; fill: #333; }
.digits { font: 10px "Noto Sans", sans-serif; fill: #333; }
.number .body { flex-direction: column; padding-left: 8px; }
.number .picker { width: 91px; flex: none; }
.number .line { height: 26px; justify-items: center; }
.formats { grid-template-columns: 22px 17px 28px 26px; }
.sym { font-size: 18px; color: #444; }
.decimals { grid-template-columns: 24px 28px; }
.rows { flex-direction: column; align-items: flex-start; }
.rows button { gap: 4px; height: 26px; }
.styles .rows { padding-left: 8px; }
.cellsgrp .rows { padding-left: 12px; }
.styles .caption { padding-right: 4px; }
.split { display: flex; justify-content: space-between; width: 73px; }
.split.wide { width: 77px; }
.edits { display: grid; grid-template: repeat(3, 26px) / 18px 16px; padding-left: 10px; margin-right: 12px; }
.edits .far { width: 30px; }
.edits button { height: 26px; }
.big { flex-direction: column; justify-content: flex-start; padding-top: 4px; width: 46px; }
.editing .big { padding-top: 5px; }
.big > svg { height: 30px; }
.big span { margin-top: 4px; text-align: center; }
.big span svg { display: inline-block; vertical-align: 2px; }
.addins .big, .adobe .big { width: 100%; }
.group.addins, .group.adobe { padding-right: 1px; }
.collapse { margin-left: auto; align-self: flex-end; width: 30px; height: 28px; }

.formulabar { flex: none; display: flex; align-items: center; margin: 8px 8px 7px; height: 26px; font-size: 12px; }
.namebox, .fx, .entry { height: 26px; background: #fff; border: 1px solid #d0d0d0; border-radius: 4px; display: flex; align-items: center; }
.namebox { width: 102px; padding: 0 5px 0 6px; }
.namebox input, .entry input { flex: 1; min-width: 0; }
.dots { width: 2px; height: 12px; margin: 0 9px; background: repeating-linear-gradient(#333 0 2px, transparent 2px 5px); }
.fx { width: 73px; margin-right: 5px; }
.fx button { width: 24px; }
.fx .fn { font: italic 700 18px "Liberation Serif", serif; color: #444; }
.entry { flex: 1; padding: 0 3px 0 11px; font-size: 13px; }

.sheet { flex: 1; min-height: 0; display: flex; }
.gridwrap { flex: 1; min-width: 0; overflow: hidden; background: #fff; }
table { border-collapse: separate; border-spacing: 0; table-layout: fixed; width: 1402px; font-size: 13px; color: #111; }
.num { width: 26px; } .first { width: 160px; } .std { width: 64px; }
th, td { height: 20px; padding: 0 2px; overflow: hidden; white-space: nowrap; border-right: 1px solid #dcdcdc; border-bottom: 1px solid #dcdcdc; }
td { line-height: 18px; padding-top: 1px; }
th { font-weight: 400; font-size: 12px; color: #555; background: #f0f0f0; text-align: center; }
thead th { line-height: 16px; padding-top: 0; border-bottom-color: #aaa; }
tbody th { line-height: 18px; padding: 1px 0 0; border-right-color: #aaa; border-bottom-color: #e4e4e4; }
th.sel { background: #dedede; color: #176d42; }
thead .sel { border-bottom: 1px solid #176d42; }
tbody th.sel { border-right: 2px solid #176d42; }
.corner svg { margin-left: 9px; }
.value { text-align: right; }
.spill { overflow: visible; border-right-color: transparent; }
.active { position: relative; overflow: visible; }
.active::before { content: ""; position: absolute; inset: -2px; border: 2px solid #176d42; }
.active::after { content: ""; position: absolute; right: -4px; bottom: -3px; width: 6px; height: 6px; background: #176d42; border: solid #fff; border-width: 1px 0 0 1px; }
.vscroll { width: 22px; flex: none; display: flex; flex-direction: column; align-items: center; border-left: 1px solid #ddd; }
.vscroll button { height: 16px; width: 16px; flex: none; }
.vscroll button:last-child { height: 12px; }
.vscroll .thumb { width: 9px; border-radius: 5px; background: #707070; flex: 17; }
.vscroll .track { flex: 1; }

.tabs { flex: none; height: 32px; display: flex; align-items: center; border-top: 1px solid #ddd; background: #eee; padding-bottom: 2px; }
.step { width: 32px; height: 30px; }
.step:first-child { margin-left: 16px; }
.tab { align-self: flex-start; margin-left: 36px; height: 27px; padding: 0 8px; background: #fff; border-radius: 0 0 5px 5px; box-shadow: 0 1px 2px #ccc; font-weight: 600; font-size: 13px; }
.tab span { border-bottom: 2px solid #176d42; line-height: 19px; }
.tabrule { width: 1px; height: 18px; background: #ccc; margin-left: 4px; }
.add { width: 94px; height: 30px; }
.tabs .dots { margin: 0 16px 0 auto; }
.hscroll { width: 506px; display: flex; align-items: center; margin-right: 21px; }
.hscroll button { width: 14px; height: 16px; }
.hscroll .thumb { flex: 1; height: 9px; border-radius: 5px; background: #707070; margin-left: 2px; }
.hscroll .right { margin-left: 26px; }

.status { flex: none; height: 22px; background: #f5f5f5; display: flex; align-items: center; padding: 0 8px 0 11px; }
.access { margin-left: 19px; gap: 3px; }
.views { margin-left: auto; display: flex; }
.views button { width: 40px; height: 22px; }
.views .on { background: #dedede; }
.zbtn { width: 20px; height: 20px; }
.zoom { appearance: none; width: 99px; height: 12px; background: linear-gradient(#777, #777) center / 100% 1px no-repeat; }
.zoom::-webkit-slider-thumb { appearance: none; width: 5px; height: 11px; background: #555; }
.pct { width: 34px; justify-content: flex-end; }

.taskbar { flex: none; height: 40px; background: #1d1d1d; display: flex; color: #fff; }
.start { width: 48px; }
.wsearch { width: 288px; background: #f2f2f2; border: 1px solid #b8b8b8; display: flex; align-items: center; gap: 11px; padding-left: 10px; }
.wsearch input { flex: 1; min-width: 0; font-size: 14px; color: #333; padding-top: 1px; }
.wsearch input::placeholder { color: #444; }
.taskview { width: 51px; padding-right: 3px; }
.app { width: 49px; position: relative; }
.open::after { content: ""; position: absolute; left: 4px; right: 5px; bottom: 0; height: 2px; background: #76b9ed; }
.live { background: #484848; }
.live::after { left: 0; right: 0; }
.zm { font: 700 12px "Open Sans", sans-serif; fill: #fff; text-anchor: middle; }
.tray { margin-left: auto; display: flex; }
.tray > button { width: 24px; }
.tray .clock { width: 66px; flex-direction: column; line-height: 18px; }
.tray .notes { width: 47px; position: relative; padding-right: 9px; margin-right: 5px; box-shadow: 1px 0 #666; }
.count { position: absolute; left: 16px; top: 17px; width: 20px; height: 20px; border-radius: 50%; background: #333; border: 1px solid #888; font-size: 11px; line-height: 18px; text-align: center; font-weight: 600; }
</style>
